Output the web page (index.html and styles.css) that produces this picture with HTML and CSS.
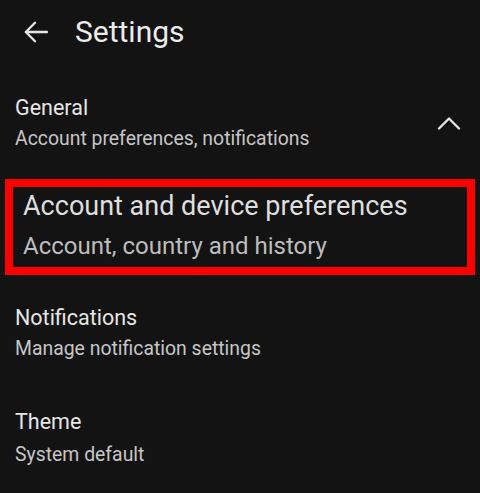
FILE: index.html
```
<!DOCTYPE html>
<html>
<head>
<meta charset="utf-8">
<link rel="stylesheet" href="styles.css">
</head>
<body>
<header class="topbar">
  <svg class="back" width="24" height="22" viewBox="0 0 24 22"><path d="M23 11H2.5M11 1.8L1.8 11L11 20.2" fill="none" stroke="#e6e6e6" stroke-width="2.3" stroke-linecap="round" stroke-linejoin="round"/></svg>
  <h1 class="title">Settings</h1>
</header>
<section class="group">
  <div class="group-text">
    <div class="item-title">General</div>
    <div class="item-sub">Account preferences, notifications</div>
  </div>
  <svg class="chev" width="24" height="14" viewBox="0 0 24 14"><path d="M2 12.5L12 2.5L22 12.5" fill="none" stroke="#e6e6e6" stroke-width="2.3" stroke-linecap="round" stroke-linejoin="round"/></svg>
</section>
<div class="highlight">
  <div class="hl-title">Account and device preferences</div>
  <div class="hl-sub">Account, country and history</div>
</div>
<div class="item item-notif">
  <div class="item-title">Notifications</div>
  <div class="item-sub">Manage notification settings</div>
</div>
<div class="item item-theme">
  <div class="item-title">Theme</div>
  <div class="item-sub sub-theme">System default</div>
</div>
</body>
</html>
```
FILE: styles.css
```
html, body {
  margin: 0;
  padding: 0;
  background: #131313;
}
body {
  width: 480px;
  height: 493px;
  overflow: hidden;
  font-family: Roboto, "Noto Sans", sans-serif;
  color: #e6e6e6;
}
.topbar {
  display: flex;
  align-items: center;
  padding: 12px 0 0 24px;
  height: 40px;
}
.back {
  display: block;
  margin-right: 27px;
}
.title {
  margin: 0;
  font-size: 30px;
  font-weight: 400;
  line-height: 40px;
  color: #ececec;
}
.group {
  display: flex;
  align-items: center;
  justify-content: space-between;
  margin-top: 42px;
  padding: 0 19px 0 15px;
}
.chev {
  display: block;
}
.item-title {
  font-size: 21.5px;
  line-height: 28px;
  color: #e6e6e6;
}
.item-sub {
  margin-top: 4px;
  font-size: 19.4px;
  line-height: 26px;
  color: #c6c6c6;
}
.highlight {
  margin: 27px 5px 0 5px;
  border: 8px solid #ff0000;
  padding: 2px 10px 6px 10px;
}
.hl-title {
  font-size: 27px;
  line-height: 34px;
  color: #dedede;
}
.hl-sub {
  margin-top: 8px;
  font-size: 24px;
  line-height: 30px;
  color: #bdbdbd;
}
.item {
  padding-left: 15px;
}
.item-notif {
  margin-top: 29px;
}
.item-theme {
  margin-top: 46px;
}
.sub-theme {
  margin-top: 6px;
}
```
